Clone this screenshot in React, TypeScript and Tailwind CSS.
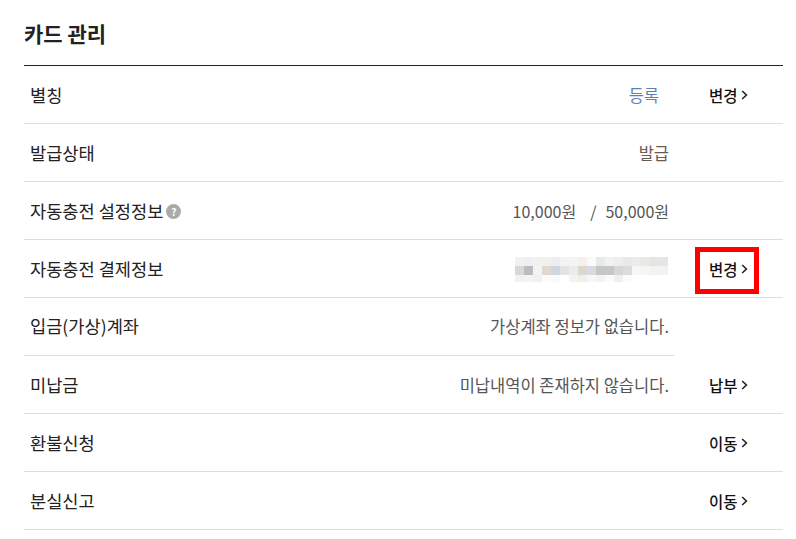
const font = { fontFamily: '"Noto Sans CJK KR", "Noto Sans", sans-serif' };

const mosaic = [
  ['#f1f1f1', '#efefef', '#f0f2f2', '#f2f0ec', '#ebeff3', '#f3f3f4', '#f4f4f4', '#f2f1ef', '#fafafa', '#e8e9eb', '#f3f2f0', '#ecedec', '#e8e9e8', '#ebebea', '#e9e9e8', '#e7e4e0', '#e4e5e6'],
  ['#d8d8da', '#bcbcbe', '#f3f3f2', '#dfd8ce', '#cfd6de', '#e3e3e4', '#ececec', '#ded7cf', '#d5dbe2', '#c4c7c3', '#c6c6c4', '#d6d6d6', '#dadbde', '#f7f7f5', '#f6f6f6', '#f3f3f3', '#f2f2f2'],
  ['#f2f2ef', '#f4f4f3', '#eef0f2', '#fcfbf7', '#f8fbfd', '#ffffff', '#f4f3f0', '#f0efec', '#f6f7f8', '#f4f3f1', '#fbfbfc', '#f1efee', '#fbfbfd', '#ffffff', '#ffffff', '#ffffff', '#ffffff'],
];

function Mosaic() {
  return (
    <svg width="153" height="25" viewBox="0 0 153 25" className="mr-px block" shapeRendering="crispEdges">
      {mosaic.map((row, y) =>
        row.map((c, x) => <rect key={`${x}-${y}`} x={x * 9} y={y * 9} width="9" height={y === 2 ? 7 : 9} fill={c} />)
      )}
    </svg>
  );
}

function Action({ label, marked }: { label: string; marked?: boolean }) {
  return (
    <span className="relative flex items-center text-[15.5px] font-medium leading-[22px] text-[#111]">
      {label}
      <svg width="7" height="10" viewBox="0 0 7 10" className="ml-[3px]" fill="none">
        <path d="M1.2 1 L5.4 5 L1.2 9" stroke="#222" strokeWidth="1.6" />
      </svg>
      {marked && <span className="absolute left-[-14px] top-[-11px] h-[47px] w-[64px] border-[5px] border-[#ff0000]" />}
    </span>
  );
}

function Row({
  label,
  value,
  action,
  marked,
  noLine,
  children,
}: {
  label: React.ReactNode;
  value?: React.ReactNode;
  action?: string;
  marked?: boolean;
  noLine?: boolean;
  children?: React.ReactNode;
}) {
  return (
    <div className={noLine ? 'flex h-[58px]' : 'flex h-[58px] border-b border-[#dddddd]'}>
      <div className={noLine ? 'flex w-[650px] items-center justify-between border-b border-[#dddddd] pl-[6px] pr-[5px]' : 'flex w-[650px] items-center justify-between pl-[6px] pr-[5px] pt-[2px]'}>
        <div className="flex items-center text-[17.6px] text-[#222]">{label}</div>
        {children ?? <div className="text-[16.5px] text-[#555]">{value}</div>}
      </div>
      <div className="flex flex-1 items-center pl-[35px]">{action && <Action label={action} marked={marked} />}</div>
    </div>
  );
}

export default function App() {
  return (
    <div className="h-[539px] w-[796px] overflow-hidden bg-white pl-[24px] pr-[13px]" style={font}>
      <div className="flex h-[66px] items-start border-b border-[#222] pt-[17px]">
        <h1 className="text-[21px] font-bold leading-[32px] text-[#222]">카드 관리</h1>
      </div>
      <Row label="별칭" value={<span className="mr-[10px] text-[#5b82b8]">등록</span>} action="변경" />
      <Row label="발급상태" value={<span className="text-[#6b5a50]">발급</span>} />
      <Row
        label={
          <>
            자동충전 설정정보
            <span className="ml-[3px] flex h-[15px] w-[15px] items-center justify-center rounded-full bg-[#aaaaaa] text-[10px] font-bold text-white">?</span>
          </>
        }
        value={
          <span className="text-[16px]">
            10,000원<span className="ml-[14px] mr-[9px]">/</span>50,000원
          </span>
        }
      />
      <Row label="자동충전 결제정보" action="변경" marked>
        <Mosaic />
      </Row>
      <Row label="입금(가상)계좌" value="가상계좌 정보가 없습니다." noLine />
      <Row label="미납금" value="미납내역이 존재하지 않습니다." action="납부" />
      <Row label="환불신청" action="이동" />
      <Row label="분실신고" action="이동" />
    </div>
  );
}
